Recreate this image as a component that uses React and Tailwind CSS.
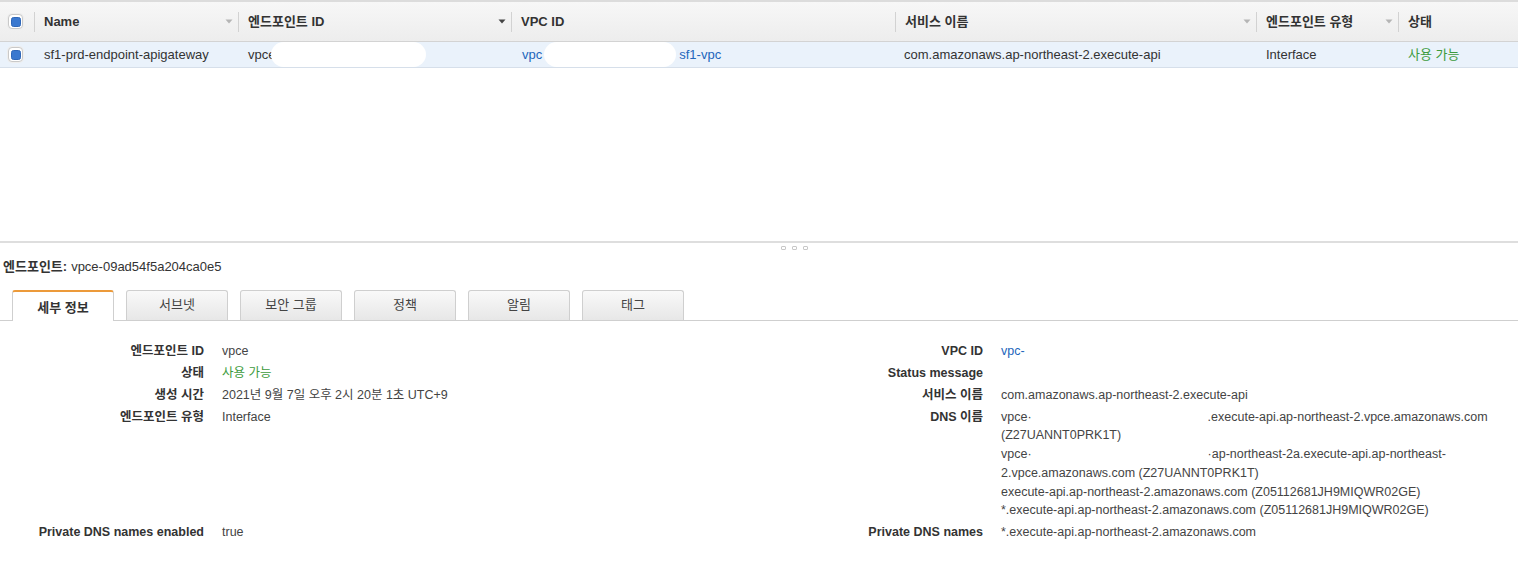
const COLS = [
  { key: 'check', w: 'w-[34px]' },
  { key: 'name', label: 'Name', w: 'w-[204px]', arrow: 'light' },
  { key: 'id', label: '엔드포인트 ID', w: 'w-[273px]', arrow: 'dark' },
  { key: 'vpc', label: 'VPC ID', w: 'w-[384px]' },
  { key: 'svc', label: '서비스 이름', w: 'w-[361px]', arrow: 'light' },
  { key: 'type', label: '엔드포인트 유형', w: 'w-[142px]', arrow: 'light' },
  { key: 'state', label: '상태', w: 'w-[120px]' },
];

const TABS = ['세부 정보', '서브넷', '보안 그룹', '정책', '알림', '태그'];

function Checkbox() {
  return (
    <span className="inline-flex w-[15px] h-[15px] rounded-[4px] border border-[#c9c9c9] bg-white p-[1.5px] shadow-[0_0_0_1px_#eee]">
      <span className="flex-1 rounded-[2.5px] bg-[#3a78cf] border border-[#2f67b8]" />
    </span>
  );
}

function SortArrow({ tone }) {
  return (
    <svg className="ml-auto mr-[5px]" width="8" height="5" viewBox="0 0 8 5">
      <path d="M0.5 0.5h7L4 4.5z" fill={tone === 'dark' ? '#444' : '#b5b5b5'} />
    </svg>
  );
}

function Blob({ w, className = '' }) {
  return <span className={`inline-block align-middle h-[25px] bg-white rounded-full ${className}`} style={{ width: w }} />;
}

function Row({ label, children }) {
  return (
    <>
      <div className="text-right font-bold text-[#333] py-[1.5px]">{label}</div>
      <div className="pl-[18px] py-[1.5px] text-[#444]">{children}</div>
    </>
  );
}

export default function App() {
  return (
    <div className="w-[1518px] h-[576px] bg-white overflow-hidden font-['Liberation_Sans','Noto_Sans_CJK_KR',sans-serif] text-[13px] text-[#444]">
      {/* Table */}
      <div className="border-t-2 border-[#dcdcdc]">
        <div className="flex h-[39px] bg-gradient-to-b from-[#f7f7f7] to-[#ededed] border-b border-[#d3d3d3] box-content">
          {COLS.map((c) => (
            <div key={c.key} className={`${c.w} flex items-center`}>
              {c.key === 'check' ? (
                <span className="ml-[8px] flex"><Checkbox /></span>
              ) : (
                <>
                  <span className="w-px h-[20px] bg-[#d2d2d2]" />
                  <span className="pl-[9px] font-bold text-[#333]">{c.label}</span>
                  {c.arrow && <SortArrow tone={c.arrow} />}
                </>
              )}
            </div>
          ))}
        </div>
        <div className="flex h-[26px] bg-[#eaf2fb] border-b border-[#d6dfea] items-center">
          <div className="w-[34px] flex items-center"><span className="ml-[8px] flex"><Checkbox /></span></div>
          <div className="w-[204px] pl-[10px] text-[#333]">sf1-prd-endpoint-apigateway</div>
          <div className="w-[273px] pl-[10px] text-[#333] flex items-center">vpce<Blob w={155} className="-ml-[4px]" /></div>
          <div className="w-[384px] pl-[11px] flex items-center text-[#2266bb]">
            vpc<Blob w={132} className="ml-[2px]" /><span className="ml-[3px]">sf1-vpc</span>
          </div>
          <div className="w-[361px] pl-[9px] text-[#333]">com.amazonaws.ap-northeast-2.execute-api</div>
          <div className="w-[142px] pl-[10px] text-[#333]">Interface</div>
          <div className="w-[120px] pl-[10px] text-[#3d9b3d]">사용 가능</div>
        </div>
      </div>

      <div className="h-[173px]" />

      {/* Split handle */}
      <div className="border-t-2 border-[#dedede]">
        <div className="flex justify-center gap-[6px] pl-[70px] pt-[3px] h-[10px]">
          {[0, 1, 2].map((i) => (
            <span key={i} className="w-[5px] h-[4px] rounded-[1px] border border-[#c8c8c8]" />
          ))}
        </div>
      </div>

      {/* Detail panel */}
      <div className="pl-[3px] pt-[1px] h-[27px] flex items-center text-[#333]">
        <span className="font-bold">엔드포인트:</span>
        <span className="ml-[4px]">vpce-09ad54f5a204ca0e5</span>
      </div>

      <div className="mt-[10px] flex items-end gap-[12px] pl-[12px] border-b border-[#cfcfcf] h-[31px]">
        {TABS.map((t, i) =>
          i === 0 ? (
            <div key={t} className="w-[102px] h-[31px] -mb-px bg-white border border-[#cfcfcf] border-b-0 border-t-2 border-t-[#ec9a3a] rounded-t-[3px] flex items-center justify-center font-bold text-[#333] pt-[2px]">
              {t}
            </div>
          ) : (
            <div key={t} className="w-[102px] h-[30px] bg-gradient-to-b from-[#f9f9f9] to-[#e7e7e7] border border-[#cfcfcf] border-b-0 rounded-t-[3px] flex items-center justify-center text-[#444] pb-[2px]">
              {t}
            </div>
          )
        )}
      </div>

      <div className="pt-[19px] grid grid-cols-[204px_656px_123px_1fr] text-[12.5px] leading-[19px]">
        <div className="grid grid-cols-[204px_1fr] col-span-2 content-start">
          <Row label="엔드포인트 ID">vpce</Row>
          <Row label="상태"><span className="text-[#3d9b3d]">사용 가능</span></Row>
          <Row label="생성 시간">2021년 9월 7일 오후 2시 20분 1초 UTC+9</Row>
          <Row label="엔드포인트 유형">Interface</Row>
        </div>
        <div className="grid grid-cols-[123px_1fr] col-span-2 content-start">
          <Row label="VPC ID"><span className="text-[#2266bb]">vpc-</span></Row>
          <Row label="Status message">{''}</Row>
          <Row label="서비스 이름">com.amazonaws.ap-northeast-2.execute-api</Row>
          <Row label="DNS 이름">
            <div className="leading-[18.8px]">
              <div className="flex"><span>vpce·</span><span className="ml-[176px]">.execute-api.ap-northeast-2.vpce.amazonaws.com</span></div>
              <div>(Z27UANNT0PRK1T)</div>
              <div className="flex"><span>vpce·</span><span className="ml-[176px]">·ap-northeast-2a.execute-api.ap-northeast-</span></div>
              <div>2.vpce.amazonaws.com (Z27UANNT0PRK1T)</div>
              <div>execute-api.ap-northeast-2.amazonaws.com (Z05112681JH9MIQWR02GE)</div>
              <div>*.execute-api.ap-northeast-2.amazonaws.com (Z05112681JH9MIQWR02GE)</div>
            </div>
          </Row>
        </div>
        <div className="grid grid-cols-[204px_1fr] col-span-2">
          <Row label="Private DNS names enabled">true</Row>
        </div>
        <div className="grid grid-cols-[123px_1fr] col-span-2">
          <Row label="Private DNS names">*.execute-api.ap-northeast-2.amazonaws.com</Row>
        </div>
      </div>
    </div>
  );
}
